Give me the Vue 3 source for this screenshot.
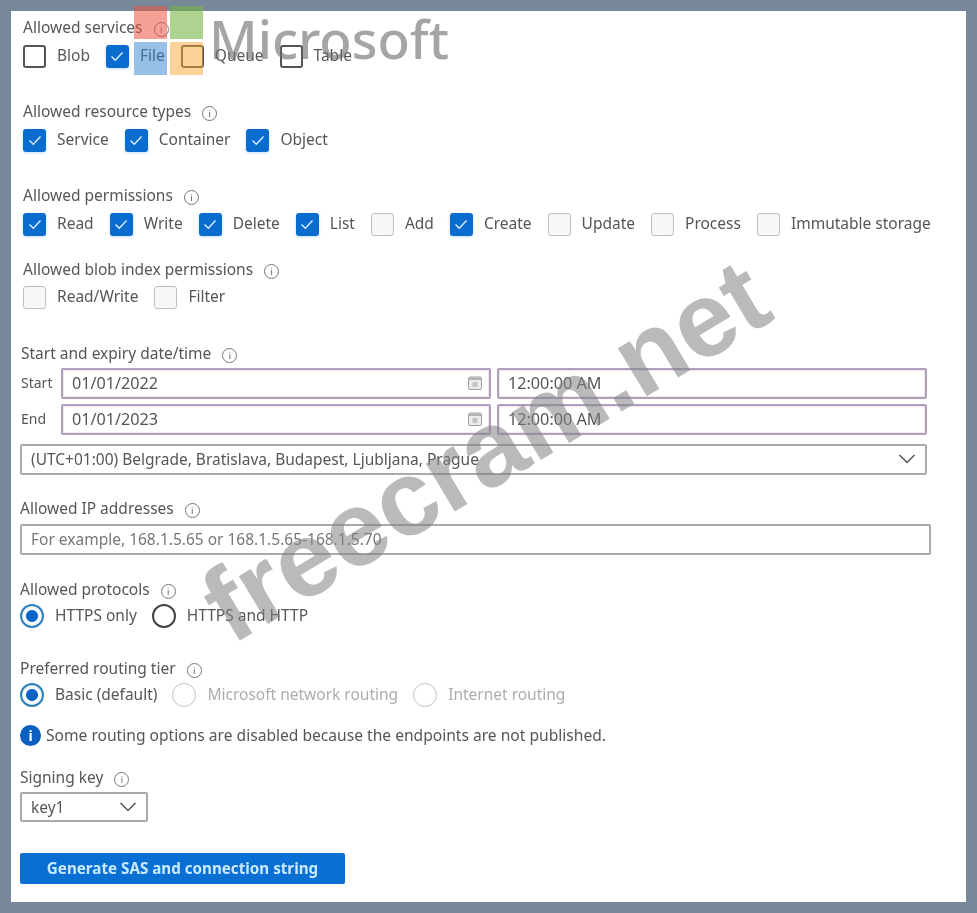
<script setup>
const services = [
  { label: 'Blob', checked: false, dark: true },
  { label: 'File', checked: true },
  { label: 'Queue', checked: false, dark: true },
  { label: 'Table', checked: false, dark: true }
]
const resources = [
  { label: 'Service', checked: true },
  { label: 'Container', checked: true },
  { label: 'Object', checked: true }
]
const permissions = [
  { label: 'Read', checked: true },
  { label: 'Write', checked: true },
  { label: 'Delete', checked: true },
  { label: 'List', checked: true },
  { label: 'Add', checked: false },
  { label: 'Create', checked: true },
  { label: 'Update', checked: false },
  { label: 'Process', checked: false },
  { label: 'Immutable storage', checked: false }
]
const blobPermissions = [
  { label: 'Read/Write', checked: false },
  { label: 'Filter', checked: false }
]
const dates = [
  { label: 'Start', date: '01/01/2022', time: '12:00:00 AM' },
  { label: 'End', date: '01/01/2023', time: '12:00:00 AM' }
]
const protocols = [
  { label: 'HTTPS only', state: 'on' },
  { label: 'HTTPS and HTTP', state: 'off' }
]
const tiers = [
  { label: 'Basic (default)', state: 'on' },
  { label: 'Microsoft network routing', state: 'disabled' },
  { label: 'Internet routing', state: 'disabled' }
]
const checkGroups = [
  { title: 'Allowed services', items: services, cls: 'g-services' },
  { title: 'Allowed resource types', items: resources, cls: 'g-resources' },
  { title: 'Allowed permissions', items: permissions, cls: 'g-permissions' },
  { title: 'Allowed blob index permissions', items: blobPermissions, cls: 'g-blob' }
]
</script>

<template>
  <div class="frame">
    <div class="panel">
      <section v-for="g in checkGroups" :key="g.title" class="group" :class="g.cls">
        <div class="label">{{ g.title }} <span class="info">i</span></div>
        <div class="options">
          <label v-for="item in g.items" :key="item.label" class="check">
            <span class="box" :class="{ checked: item.checked, dark: item.dark }">
              <svg v-if="item.checked" width="16" height="16" viewBox="0 0 16 16">
                <path d="M2.5 8.5 L6.3 12.2 L13.5 4.5" fill="none" stroke="#dcefff" stroke-width="1.4" />
              </svg>
            </span>
            <span class="txt">{{ item.label }}</span>
          </label>
        </div>
      </section>

      <section class="group g-dates">
        <div class="label">Start and expiry date/time <span class="info">i</span></div>
        <div v-for="d in dates" :key="d.label" class="date-row">
          <span class="date-label">{{ d.label }}</span>
          <div class="input purple date-input">
            <span>{{ d.date }}</span>
            <svg class="cal" width="16" height="16" viewBox="0 0 16 16">
              <rect x="1.5" y="2" width="13" height="12.5" rx="1.5" fill="#ececec" stroke="#a0a0a0" />
              <rect x="2" y="2.5" width="12" height="2.5" fill="#b5b5b5" />
              <rect x="5.5" y="7" width="5" height="5" fill="#c4c4c4" />
            </svg>
          </div>
          <div class="input purple time-input">{{ d.time }}</div>
        </div>
        <div class="input zone">
          <span>(UTC+01:00) Belgrade, Bratislava, Budapest, Ljubljana, Prague</span>
          <svg width="18" height="10" viewBox="0 0 18 10"><path d="M1.5 1 L9 8.5 L16.5 1" fill="none" stroke="#555" stroke-width="1.5" /></svg>
        </div>
      </section>

      <section class="group g-ip">
        <div class="label">Allowed IP addresses <span class="info">i</span></div>
        <div class="input ip">For example, 168.1.5.65 or 168.1.5.65-168.1.5.70</div>
      </section>

      <section class="group g-protocols">
        <div class="label">Allowed protocols <span class="info">i</span></div>
        <div class="radios">
          <label v-for="p in protocols" :key="p.label" class="radio" :class="p.state">
            <span class="ring"></span><span class="txt">{{ p.label }}</span>
          </label>
        </div>
      </section>

      <section class="group g-tier">
        <div class="label">Preferred routing tier <span class="info">i</span></div>
        <div class="radios">
          <label v-for="t in tiers" :key="t.label" class="radio" :class="t.state">
            <span class="ring"></span><span class="txt">{{ t.label }}</span>
          </label>
        </div>
        <div class="notice">
          <span class="notice-icon">i</span>
          <span>Some routing options are disabled because the endpoints are not published.</span>
        </div>
      </section>

      <section class="group g-key">
        <div class="label">Signing key <span class="info">i</span></div>
        <div class="input key">
          <span>key1</span>
          <svg width="18" height="10" viewBox="0 0 18 10"><path d="M1.5 1 L9 8.5 L16.5 1" fill="none" stroke="#555" stroke-width="1.5" /></svg>
        </div>
      </section>

      <button class="generate">Generate SAS and connection string</button>
    </div>

    <!-- watermarks sit over the form -->
    <div class="ms-logo">
      <i class="red"></i><i class="green"></i><i class="blue"></i><i class="orange"></i>
    </div>
    <div class="ms-word">Microsoft</div>
    <div class="stamp">freecram.net</div>
  </div>
</template>

<style>
body { margin: 0; }
</style>

<style scoped>
.frame {
  position: relative;
  width: 977px;
  height: 913px;
  box-sizing: border-box;
  padding: 11px;
  background: #77889a;
  overflow: hidden;
  font-family: "Noto Sans", "Open Sans", sans-serif;
  font-size: 15.5px;
  color: #565656;
  filter: blur(.35px);
}
.panel {
  height: 891px;
  box-sizing: border-box;
  padding-top: 6px;
  background: #fff;
  overflow: hidden;
}
.group { margin-left: 12px; }
.label {
  height: 20px;
  line-height: 20px;
  white-space: nowrap;
}
.info {
  display: inline-flex;
  align-items: center;
  justify-content: center;
  box-sizing: border-box;
  width: 15px;
  height: 15px;
  margin-left: 7px;
  border: 1px solid #777;
  border-radius: 50%;
  font-size: 9px;
  line-height: 1;
  vertical-align: 0;
}
.options {
  display: flex;
  gap: 16px;
  height: 24px;
  margin-top: 7px;
  white-space: nowrap;
}
.check {
  display: flex;
  align-items: center;
  gap: 11px;
}
.txt { padding-bottom: 2px; }
.box {
  display: flex;
  align-items: center;
  justify-content: center;
  box-sizing: border-box;
  width: 23px;
  height: 23px;
  border: 1.5px solid #bdbdbd;
  border-radius: 3px;
  background: #f7f7f7;
}
.box.dark {
  border: 2px solid #555;
  background: #fff;
}
.box.checked {
  border: 0;
  background: #0a6ccf;
  box-shadow: 0 1px 3px rgba(60, 160, 240, .35);
}
.g-resources, .g-permissions { margin-top: 33px; }
.g-blob { margin-top: 23px; }
.g-blob .options { margin-top: 6px; }

.g-dates { margin: 34px 0 0 10px; }
.g-dates .label { margin-bottom: 5px; }
.date-row {
  display: flex;
  align-items: center;
  height: 31px;
  margin-bottom: 5px;
}
.date-label {
  width: 40px;
  padding-bottom: 2px;
  font-size: 14px;
}
.input {
  display: flex;
  align-items: center;
  justify-content: space-between;
  box-sizing: border-box;
  height: 31px;
  padding: 0 9px 2px;
  border: 2px solid #a9a9a9;
  border-radius: 2px;
  background: #fff;
  white-space: nowrap;
}
.purple {
  border-color: #b29fbd;
  box-shadow: inset 0 0 0 1px #efe6f2;
  font-size: 16.2px;
}
.date-input { width: 430px; }
.date-input .cal { margin-right: -3px; }
.time-input { width: 430px; margin-left: 6px; }
.zone {
  width: 907px;
  margin: 9px 0 0 -1px;
}
.g-ip { margin: 23px 0 0 9px; }
.ip { width: 911px; margin-top: 6px; color: #777; }
.g-protocols { margin: 24px 0 0 9px; }
.radios {
  display: flex;
  gap: 15px;
  height: 24px;
  margin-top: 5px;
  white-space: nowrap;
}
.radio {
  display: flex;
  align-items: center;
  gap: 11px;
}
.radio.disabled { color: #adadad; }
.ring {
  box-sizing: border-box;
  width: 24px;
  height: 24px;
  border: 2px solid #444;
  border-radius: 50%;
  background: #fff;
}
.radio.on .ring {
  border-color: #2f7fb8;
  box-shadow: inset 0 0 0 1px #dcecf7;
  background: radial-gradient(circle, #0a62c4 0 5.5px, #fff 6.5px);
}
.radio.disabled .ring { border: 1.5px solid #c4c4c4; }
.g-tier { margin: 30px 0 0 9px; }
.notice {
  display: flex;
  align-items: center;
  gap: 5px;
  height: 20px;
  margin-top: 18px;
  font-size: 15.6px;
  white-space: nowrap;
}
.notice-icon {
  display: flex;
  align-items: center;
  justify-content: center;
  width: 21px;
  height: 21px;
  border-radius: 50%;
  background: #0a5fc0;
  color: #fff;
  font-size: 14px;
  font-weight: 700;
}
.g-key { margin: 22px 0 0 9px; }
.key { width: 128px; height: 30px; margin-top: 5px; padding-bottom: 1px; }
.generate {
  display: block;
  width: 325px;
  height: 31px;
  margin: 31px 0 0 9px;
  padding: 0 0 2px;
  border: 0;
  border-radius: 2px;
  background: #0a6fd2;
  color: #c8eaff;
  font: 700 15.2px "Noto Sans", sans-serif;
}

.ms-logo {
  position: absolute;
  left: 134px;
  top: 6px;
  display: grid;
  grid-template-columns: 33px 33px;
  grid-auto-rows: 33px;
  gap: 3px;
}
.ms-logo i { display: block; }
.red { background: rgba(236, 84, 62, .55); }
.green { background: rgba(120, 180, 70, .6); }
.blue { background: rgba(50, 130, 205, .5); }
.orange { background: rgba(250, 165, 50, .5); }
.ms-word {
  position: absolute;
  left: 209px;
  top: 4px;
  font-size: 53px;
  font-weight: 500;
  line-height: 70px;
  color: rgba(110, 110, 110, .62);
}
.stamp {
  position: absolute;
  left: 238px;
  top: 557px;
  font: 700 106px/100px "Liberation Sans", sans-serif;
  color: rgba(130, 130, 130, .55);
  white-space: nowrap;
  transform: rotate(-31deg);
  transform-origin: 0 100%;
}
</style>
